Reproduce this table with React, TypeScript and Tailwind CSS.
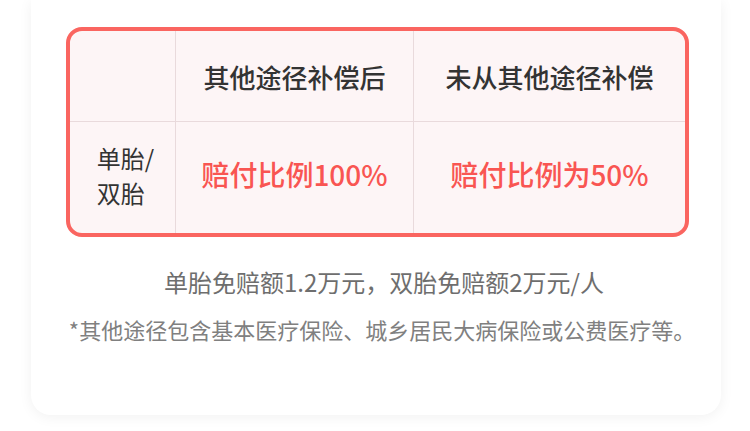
import React from "react";

export default function App() {
  const font = { fontFamily: '"Noto Sans CJK SC", "Noto Sans", sans-serif' };
  return (
    <div className="w-[750px] h-[431px] bg-white overflow-hidden" style={font}>
      <div className="ml-[31px] w-[690px] h-[415px] bg-white rounded-b-[20px] shadow-[0_2px_14px_rgba(0,0,0,0.06)] pt-[27px]">
        <div className="ml-[35px] w-[623px] h-[210px] border-[4px] border-[#fa6560] rounded-[16px] bg-[#fdf5f6] overflow-hidden">
          <div className="grid grid-cols-[105px_238px_1fr] grid-rows-[90px_112px]">
            <div />
            <div className="border-l border-[#e9dadc] flex items-center justify-center text-[26px] font-medium text-[#333333]">
              其他途径补偿后
            </div>
            <div className="border-l border-[#e9dadc] flex items-center justify-center text-[26px] font-medium text-[#333333]">
              未从其他途径补偿
            </div>
            <div className="border-t border-[#e9dadc] flex items-center justify-center pb-[6px]">
              <div className="text-left text-[24px] leading-[35px] text-[#333333] pl-[6px]">
                单胎/
                <br />
                双胎
              </div>
            </div>
            <div className="border-t border-l border-[#e9dadc] flex items-center justify-center pb-[7px] text-[28px] font-medium text-[#f95552]">
              赔付比例100%
            </div>
            <div className="border-t border-l border-[#e9dadc] flex items-center justify-center pb-[7px] text-[28px] font-medium text-[#f95552]">
              赔付比例为50%
            </div>
          </div>
        </div>
        <div className="pl-[16px] mt-[29px] text-center text-[24px] leading-[32px] text-[#6e6e6e]">
          单胎免赔额1.2万元，双胎免赔额2万元/人
        </div>
        <div className="pl-[12px] mt-[16px] text-center text-[22px] leading-[30px] text-[#808080]">
          *其他途径包含基本医疗保险、城乡居民大病保险或公费医疗等。
        </div>
      </div>
    </div>
  );
}
